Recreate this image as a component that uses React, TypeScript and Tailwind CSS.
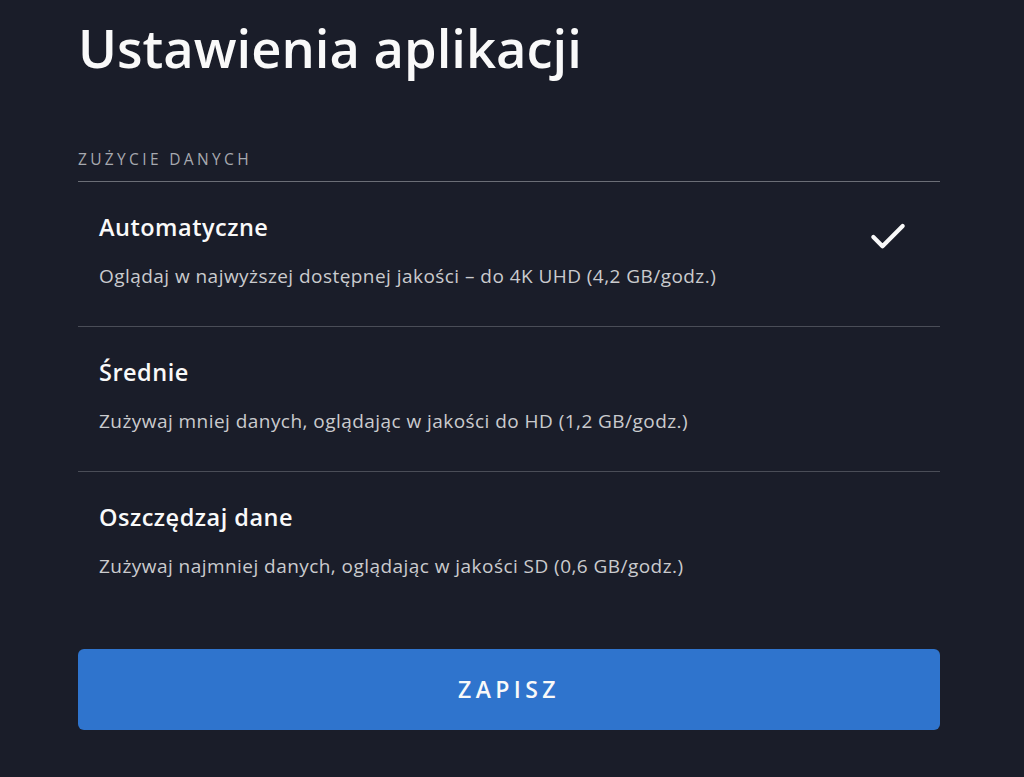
import { Check } from "lucide-react";

const options = [
  {
    title: "Automatyczne",
    desc: "Oglądaj w najwyższej dostępnej jakości – do 4K UHD (4,2 GB/godz.)",
    selected: true,
  },
  {
    title: "Średnie",
    desc: "Zużywaj mniej danych, oglądając w jakości do HD (1,2 GB/godz.)",
    selected: false,
  },
  {
    title: "Oszczędzaj dane",
    desc: "Zużywaj najmniej danych, oglądając w jakości SD (0,6 GB/godz.)",
    selected: false,
  },
];

export default function App() {
  return (
    <div
      className="h-[777px] w-[1024px] overflow-hidden bg-[#1a1d29] text-white"
      style={{ fontFamily: "'Open Sans', 'Noto Sans', sans-serif" }}
    >
      <div className="ml-[78px] w-[862px]">
        <h1 className="pt-[12px] text-[52.5px] leading-[72px] font-semibold text-[#f9f9f9]">
          Ustawienia aplikacji
        </h1>

        <div className="mt-[65px] border-b border-[#6b6e76] pb-[12px] text-[15.5px] leading-[20px] tracking-[3.35px] text-[#a7a9af] uppercase">
          Zużycie danych
        </div>

        <ul>
          {options.map((o, i) => (
            <li
              key={o.title}
              className={
                i < options.length - 1
                  ? "flex h-[145px] items-start justify-between border-b border-[#4a4d57] pl-[21px] pr-[30px]"
                  : "flex h-[145px] items-start justify-between pl-[21px] pr-[30px]"
              }
            >
              <div>
                <div className="mt-[31px] text-[23.5px] leading-[28px] font-semibold tracking-[0.5px] text-[#f9f9f9]">
                  {o.title}
                </div>
                <div className="mt-[22px] text-[19px] leading-[26px] tracking-[0.45px] text-[#cacbce]">
                  {o.desc}
                </div>
              </div>
              {o.selected && (
                <Check
                  className="mt-[33px] text-[#f9f9f9]"
                  size={44}
                  strokeWidth={2.3}
                />
              )}
            </li>
          ))}
        </ul>

        <button className="mt-[32px] flex h-[81px] w-full items-center justify-center rounded-[6px] bg-[#2f74cd] text-[23px] font-semibold tracking-[4.4px] text-[#f9f9f9]">
          ZAPISZ
        </button>
      </div>
    </div>
  );
}
